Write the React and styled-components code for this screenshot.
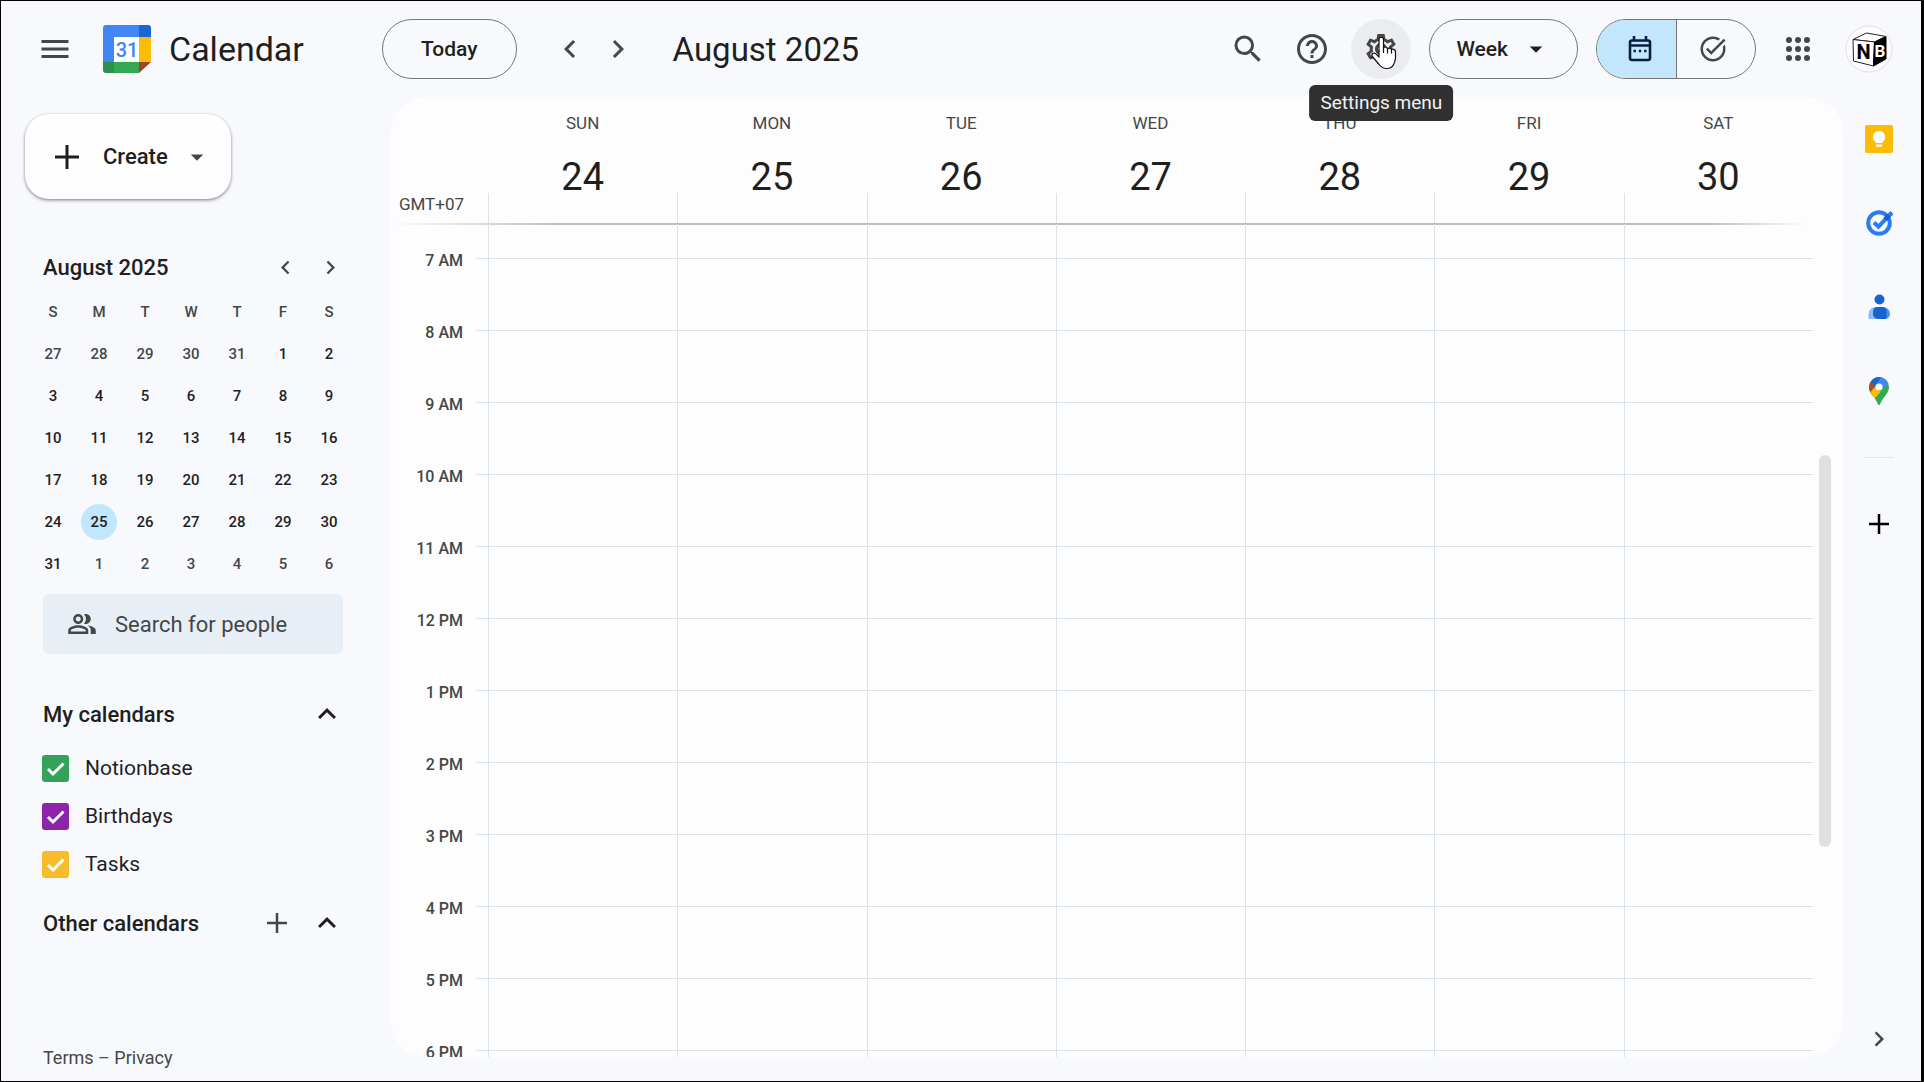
import React, { useState } from 'react'
import styled, { createGlobalStyle } from 'styled-components'
import {
    MdMenu,
    MdSearch,
    MdHelpOutline,
    MdOutlineSettings,
    MdArrowDropDown,
    MdChevronLeft,
    MdChevronRight,
    MdExpandLess,
    MdOutlinePeopleAlt,
    MdTaskAlt,
} from 'react-icons/md'

const GlobalStyle = createGlobalStyle`
    *{
        box-sizing:border-box;
    }
    body{
        margin:0;
        font-family:Roboto, "Open Sans", sans-serif;
        color:#1f1f1f;
        background-color:#f8f9fd;
    }
    button, input{
        font-family:inherit;
        color:inherit;
    }
    button{
        background:none;
        border:none;
        padding:0;
        cursor:pointer;
    }
    svg{
        display:block;
        flex:none;
    }
`

const Shell = styled.div`
    height:100vh;
    display:flex;
    flex-direction:column;
    overflow:hidden;
    border:1px solid #000;
    border-right-width:3px;
`

const Header = styled.header`
    height:96px;
    flex:none;
    display:flex;
    align-items:center;
    padding:0 22px 0 24px;
`

const IconButton = styled.button`
    position:relative;
    width:60px;
    height:60px;
    display:flex;
    align-items:center;
    justify-content:center;
    border-radius:50%;
    color:#444746;
    background-color:${props => props.$active ? '#ebecef' : 'transparent'};
`

const Brand = styled.div`
    width:279px;
    display:flex;
    align-items:center;
    gap:18px;
    margin-left:18px;
    font-size:34px;
`

const PillButton = styled.button`
    height:60px;
    display:flex;
    align-items:center;
    justify-content:center;
    gap:13px;
    padding:0 ${props => props.$side}px;
    border:1px solid #747775;
    border-radius:30px;
    font-size:21px;
    font-weight:500;
`

const Arrows = styled.div`
    display:flex;
    margin-left:35px;
`

const ArrowButton = styled.button`
    width:${props => props.$size}px;
    height:48px;
    display:flex;
    align-items:center;
    justify-content:center;
    color:${props => props.$dark ? '#1f1f1f' : '#444746'};
`

const PeriodTitle = styled.h1`
    flex:1;
    margin:0 0 0 25px;
    font-size:33px;
    font-weight:400;
`

const Tools = styled.div`
    display:flex;
    align-items:center;
    gap:4px;
    margin-right:18px;

    button:last-child{
        margin-left:5px;
    }
`

const Tooltip = styled.span`
    position:absolute;
    top:66px;
    left:50%;
    transform:translateX(-50%);
    z-index:2;
    padding:0 11px;
    border-radius:6px;
    background-color:#303030;
    color:#f2f2f2;
    font-size:19px;
    line-height:36px;
    white-space:nowrap;
`

const Hand = styled.svg`
    position:absolute;
    top:17px;
    left:19px;
`

const Toggle = styled.div`
    display:flex;
    height:60px;
    margin:0 12px 0 18px;
    border:1px solid #747775;
    border-radius:30px;
    overflow:hidden;
`

const ToggleButton = styled.button`
    width:79px;
    display:flex;
    align-items:center;
    justify-content:center;
    padding-left:6px;
    color:${props => props.$on ? '#0b1d3d' : '#444746'};
    background-color:${props => props.$on ? '#c2e7fd' : 'transparent'};

    & + &{
        padding:0 6px 0 0;
        border-left:1px solid #747775;
    }
`

const Account = styled(IconButton)`
    margin-left:11px;
`

const Body = styled.div`
    flex:1;
    min-height:0;
    display:flex;
`

const Sidebar = styled.aside`
    width:390px;
    flex:none;
    display:flex;
    flex-direction:column;
    padding:17px 38px 8px 24px;
`

const CreateButton = styled.button`
    width:206px;
    height:85px;
    flex:none;
    display:flex;
    align-items:center;
    padding-left:30px;
    border-radius:24px;
    background-color:#fefefe;
    box-shadow:0 1px 3px rgba(0,0,0,.4), 0 2px 4px rgba(0,0,0,.12);
    font-size:22px;
    font-weight:500;

    span{
        margin:0 14px 0 24px;
    }
    svg:last-child{
        color:#444746;
    }
`

const MonthHead = styled.div`
    display:flex;
    align-items:center;
    height:48px;
    margin-top:44px;
    padding-left:18px;
    font-size:22px;
    font-weight:500;

    h2{
        flex:1;
        margin:0;
        font-size:inherit;
        font-weight:inherit;
    }
`

const MonthTable = styled.table`
    width:322px;
    flex:none;
    margin-left:5px;
    border-collapse:collapse;
    table-layout:fixed;

    th, td{
        height:42px;
        padding:0;
        text-align:center;
        font-size:15px;
        font-weight:500;
    }
    th{
        color:#444746;
    }
`

const Day = styled.button`
    width:36px;
    height:36px;
    border-radius:50%;
    font-size:15px;
    font-weight:500;
    color:${props => props.$muted ? '#444746' : '#1f1f1f'};
    background-color:${props => props.$today ? '#c2e7fd' : 'transparent'};
`

const PeopleSearch = styled.label`
    height:60px;
    flex:none;
    display:flex;
    align-items:center;
    gap:18px;
    margin:9px 10px 0 18px;
    padding-left:24px;
    border-radius:6px;
    background-color:#e7eef6;
    color:#444746;

    input{
        flex:1;
        min-width:0;
        padding:0;
        border:none;
        outline:none;
        background:none;
        font-size:22px;
    }
    input::placeholder{
        color:#444746;
        opacity:1;
    }
`

const SectionHead = styled.div`
    height:60px;
    flex:none;
    display:flex;
    align-items:center;
    margin-top:${props => props.$top}px;
    padding:0 8px 0 18px;

    h3{
        flex:1;
        margin:0;
        font-size:22px;
        font-weight:500;
    }
`

const CalendarItem = styled.label`
    height:48px;
    flex:none;
    display:flex;
    align-items:center;
    gap:16px;
    padding-left:17px;
    font-size:21px;
`

const Tick = styled.span`
    display:grid;

    input{
        grid-area:1/1;
        appearance:none;
        width:27px;
        height:27px;
        margin:0;
        border:2px solid ${props => props.$color};
        border-radius:3px;
    }
    input:checked{
        background-color:${props => props.$color};
    }
    svg{
        grid-area:1/1;
        pointer-events:none;
    }
`

const Legal = styled.div`
    margin-top:auto;
    padding-left:18px;
    font-size:18px;
    line-height:30px;
    color:#444746;

    a{
        color:inherit;
        text-decoration:none;
    }
`

const Panel = styled.main`
    flex:1;
    min-width:0;
    display:flex;
    flex-direction:column;
    margin-bottom:24px;
    border-radius:36px;
    overflow:hidden;
    background-color:#fdfdfd;
`

const WeekHead = styled.div`
    height:126px;
    flex:none;
    display:flex;
    padding-right:30px;
`

const Zone = styled.div`
    width:97px;
    flex:none;
    display:flex;
    align-items:flex-end;
    justify-content:flex-end;
    padding:0 24px 10px 0;
    font-size:17px;
    line-height:18px;
    color:#444746;
`

const DayHead = styled.div`
    flex:1;
    text-align:center;
    padding-top:14px;
    background:linear-gradient(#dde3ea, #dde3ea) left bottom / 1px 30px no-repeat;

    span{
        display:block;
        font-size:17px;
        line-height:24px;
        color:#444746;
    }
    strong{
        display:block;
        margin-top:21px;
        font-size:38px;
        font-weight:400;
        line-height:42px;
    }
`

const HeadRule = styled.div`
    height:2px;
    flex:none;
    margin:0 36px -1px 0;
    background:linear-gradient(90deg, transparent, #bdbdbd 12%, #bdbdbd 93%, transparent);
`

const Scroll = styled.div`
    flex:1;
    min-height:0;
    display:flex;
    overflow:hidden;
`

const Times = styled.div`
    width:85px;
    flex:none;
`

const Hour = styled.div`
    height:72px;
    display:flex;
    align-items:center;
    justify-content:flex-end;
    padding-right:13px;
    font-size:16px;
    font-weight:500;
    color:#444746;
`

const Column = styled.div`
    flex:${props => props.$stub ? '0 0 12px' : '1'};
    border-left:${props => props.$stub ? 'none' : '1px solid #dde3ea'};
`

const Slot = styled.div`
    height:72px;
    border-bottom:1px solid #dde3ea;

    &:first-child{
        height:35px;
    }
`

const Track = styled.div`
    width:30px;
    flex:none;
    padding-left:6px;
    display:flex;
    flex-direction:column;

    &::before{
        content:'';
        height:calc(28% - 2px);
    }
`

const Thumb = styled.div`
    width:12px;
    height:47%;
    border-radius:6px;
    background-color:#e0e0e0;
`

const Rail = styled.nav`
    width:78px;
    flex:none;
    display:flex;
    flex-direction:column;
    align-items:center;
    padding:12px 6px 12px 0;
    gap:24px;
`

const RailLine = styled.hr`
    width:30px;
    margin:12px 0;
    border:none;
    border-top:1px solid #e3e5e8;
`

const RailButton = styled(IconButton)`
    flex:none;
    color:${props => props.$dark ? '#000' : '#444746'};
    margin-top:${props => props.$last ? 'auto' : 0};
`

const days = [['SUN', 24], ['MON', 25], ['TUE', 26], ['WED', 27], ['THU', 28], ['FRI', 29], ['SAT', 30]]
const hours = ['7 AM', '8 AM', '9 AM', '10 AM', '11 AM', '12 PM', '1 PM', '2 PM', '3 PM', '4 PM', '5 PM', '6 PM']
const weeks = [
    [27, 28, 29, 30, 31, 1, 2],
    [3, 4, 5, 6, 7, 8, 9],
    [10, 11, 12, 13, 14, 15, 16],
    [17, 18, 19, 20, 21, 22, 23],
    [24, 25, 26, 27, 28, 29, 30],
    [31, 1, 2, 3, 4, 5, 6],
]
const calendars = [
    { name: 'Notionbase', color: '#33a35a' },
    { name: 'Birthdays', color: '#8e24aa' },
    { name: 'Tasks', color: '#f6bc2a' },
]

const isMuted = (week, day) => (week === 0 && day > 20) || (week === 5 && day < 20)

const Plus = ({ size, weight }) => (
    <svg width={size} height={size} viewBox="0 0 24 24" stroke="currentColor" strokeWidth={weight}>
        <path d="M12 0v24M0 12h24" />
    </svg>
)

const Logo = () => (
    <svg width="48" height="48" viewBox="0 0 48 48">
        <path d="M3 0h33v12H11v25H0V3a3 3 0 0 1 3-3z" fill="#4285f4" />
        <path d="M36 0h9a3 3 0 0 1 3 3v9H36z" fill="#1967d2" />
        <path d="M36 12h12v25H36z" fill="#fbbc04" />
        <path d="M11 37h25v11H11z" fill="#34a853" />
        <path d="M0 37h11v11H3a3 3 0 0 1-3-3z" fill="#2f8f50" />
        <path d="M36 37h12L36 48z" fill="#98472b" />
        <path d="M11 12h25v25H11z" fill="#fff" />
        <text x="24" y="32" textAnchor="middle" fontFamily="Roboto" fontSize="20" fontWeight="500" fill="#4285f4">31</text>
    </svg>
)

const HandPointer = () => (
    <Hand width="28" height="34" viewBox="0 0 28 34" aria-hidden="true">
        <path
            d="M9 3.500c0-3 4.500-3 4.500 0V12c.8-1.500 3.800-1.300 4 .8.900-1.200 3.700-1 4 .9 1-1 4-.5 4 2v6c0 3-.8 4.500-1.800 6.500-1.500 3.200-4 4.300-7 4.300-4 0-6-1.500-8-4.500L2.300 20.500c-1.500-2.500 1.400-4.500 3.600-2.600L9 21z"
            fill="#fff"
            stroke="#111"
            strokeWidth="1.200"
            strokeLinejoin="round"
        />
        <path d="M13.500 11v6M17.500 12.500v5M21.500 13.500v4" stroke="#111" strokeWidth="1.200" />
    </Hand>
)

const DateIcon = () => (
    <svg width="24" height="26" viewBox="0 0 24 26" fill="none" stroke="currentColor">
        <rect x="2" y="4.500" width="20" height="19.500" rx="2" strokeWidth="2.600" />
        <path d="M1 9.500h22" strokeWidth="2.600" />
        <path d="M6 0v4M18 0v4" strokeWidth="2.600" />
        <path d="M5.500 15h2.400M10.800 15h2.400M16.100 15h2.400" strokeWidth="2.400" />
    </svg>
)

const AppsIcon = () => (
    <svg width="24" height="24" viewBox="0 0 24 24" fill="currentColor">
        {[3, 12, 21].map(y => [3, 12, 21].map(x => <circle key={x + '-' + y} cx={x} cy={y} r="3" />))}
    </svg>
)

const Avatar = () => (
    <svg width="48" height="48" viewBox="0 0 48 48">
        <circle cx="24" cy="24" r="23" fill="#fdfdfd" stroke="#dfe0e3" />
        <path d="M8 14.500L21.500 8 41 11.500 29.500 17z" fill="#fff" stroke="#222" strokeLinejoin="round" />
        <path d="M8 14.500L29.500 17 28.500 41 8.500 36z" fill="#fff" stroke="#222" strokeLinejoin="round" />
        <path d="M29.500 17L41 11.500V34L28.500 41z" fill="#000" stroke="#000" strokeLinejoin="round" />
        <text x="18.500" y="33.500" textAnchor="middle" fontFamily="Roboto" fontSize="20" fontWeight="700" fill="#000">N</text>
        <text x="35" y="32" textAnchor="middle" fontFamily="Roboto" fontSize="17" fontWeight="700" fill="#fff">B</text>
    </svg>
)

const KeepIcon = () => (
    <svg width="28" height="28" viewBox="0 0 28 28">
        <rect width="28" height="28" rx="2" fill="#fbbc04" />
        <path d="M14 6a6 6 0 0 0-3.500 10.900V18h7v-1.100A6 6 0 0 0 14 6zM11 19.600h6v2.200h-6z" fill="#fff" />
    </svg>
)

const TasksIcon = () => (
    <svg width="28" height="28" viewBox="0 0 28 28" fill="none">
        <circle cx="14" cy="14" r="10.800" stroke="#2a7cf2" strokeWidth="4" />
        <path d="M9 13.500l4.500 4.200 9-9.500" stroke="#2a7cf2" strokeWidth="4" />
        <path d="M20 10.500l7-7" stroke="#2a7cf2" strokeWidth="4.500" />
        <path d="M20.200 10.300l3.800-3.800" stroke="#165fc7" strokeWidth="4.500" />
    </svg>
)

const ContactsIcon = () => (
    <svg width="24" height="26" viewBox="0 0 24 26">
        <path d="M8 13h5v12H1.500v-5A7 7 0 0 1 8 13z" fill="#8cbdf8" />
        <path d="M12 13h4a7 7 0 0 1 7 7 5 5 0 0 1-5 5h-6z" fill="#4a8ff5" />
        <path d="M10.500 13h4.500a4.500 4.500 0 0 1 4.500 4.500V25H11a5 5 0 0 1-5-5v-2.500a4.500 4.500 0 0 1 4.500-4.500z" fill="#1765cc" />
        <circle cx="12.500" cy="5.500" r="5" fill="#1765cc" />
    </svg>
)

const MapsIcon = () => (
    <svg width="20" height="28" viewBox="0 0 20 28">
        <defs>
            <clipPath id="pin">
                <path d="M10 0a10 10 0 0 1 10 10c0 4-2 6.500-4.500 9.800-2.300 3-3.500 5-4.300 7.300-.4 1.200-2 1.200-2.400 0-.8-2.300-2-4.300-4.300-7.300C2 16.500 0 14 0 10A10 10 0 0 1 10 0z" />
            </clipPath>
        </defs>
        <g clipPath="url(#pin)">
            <path d="M0 0h20v28H0z" fill="#34a853" />
            <path d="M0 4h3l7 6-8 8-2-3z" fill="#a4502c" />
            <path d="M1 15.500l5-5.500 4 4 2 .5-7.500 8.500L0 19z" fill="#fbbc04" />
            <path d="M2 4l3-4h8L10 6l-4 3z" fill="#1967d2" />
            <path d="M12 0l8 3v4L10 12 7 8z" fill="#4285f4" />
        </g>
        <circle cx="10" cy="10" r="3.600" fill="#fff" />
    </svg>
)

const CalendarCheck = ({ name, color }) => {
    const [checked, setChecked] = useState(true)

    return (
        <CalendarItem>
            <Tick $color={color}>
                <input type="checkbox" checked={checked} onChange={() => setChecked(!checked)} />
                <svg width="27" height="27" viewBox="0 0 27 27" fill="none" stroke="#fff" strokeWidth="3">
                    <path d="M6 14l5 5L21.500 8.500" />
                </svg>
            </Tick>
            {name}
        </CalendarItem>
    )
}

const MonthPicker = () => (
    <>
        <MonthHead>
            <h2>August 2025</h2>
            <ArrowButton $size={45} aria-label="Previous month"><MdChevronLeft size={27} /></ArrowButton>
            <ArrowButton $size={45} aria-label="Next month"><MdChevronRight size={27} /></ArrowButton>
        </MonthHead>
        <MonthTable>
            <thead>
                <tr>{['S', 'M', 'T', 'W', 'T', 'F', 'S'].map((d, i) => <th key={i}>{d}</th>)}</tr>
            </thead>
            <tbody>
                {weeks.map((week, w) => (
                    <tr key={w}>
                        {week.map(day => (
                            <td key={day}>
                                <Day $muted={isMuted(w, day)} $today={w === 4 && day === 25}>{day}</Day>
                            </td>
                        ))}
                    </tr>
                ))}
            </tbody>
        </MonthTable>
    </>
)

const WeekGrid = () => (
    <Panel>
        <WeekHead>
            <Zone>GMT+07</Zone>
            {days.map(([name, number]) => (
                <DayHead key={name}>
                    <span>{name}</span>
                    <strong>{number}</strong>
                </DayHead>
            ))}
        </WeekHead>
        <HeadRule />
        <Scroll>
            <Times>
                {hours.map(hour => <Hour key={hour}>{hour}</Hour>)}
            </Times>
            <Column $stub>
                {hours.map(hour => <Slot key={hour} />)}
            </Column>
            {days.map(([name]) => (
                <Column key={name}>
                    {hours.map(hour => <Slot key={hour} />)}
                    <Slot />
                </Column>
            ))}
            <Track><Thumb /></Track>
        </Scroll>
    </Panel>
)

const App = () => (
    <>
        <GlobalStyle />
        <Shell>
            <Header>
                <IconButton aria-label="Main menu"><MdMenu size={36} /></IconButton>
                <Brand><Logo />Calendar</Brand>
                <PillButton $side={38}>Today</PillButton>
                <Arrows>
                    <ArrowButton $size={36} aria-label="Previous week"><MdChevronLeft size={36} /></ArrowButton>
                    <ArrowButton $size={60} aria-label="Next week"><MdChevronRight size={36} /></ArrowButton>
                </Arrows>
                <PeriodTitle>August 2025</PeriodTitle>
                <Tools>
                    <IconButton aria-label="Search"><MdSearch size={36} /></IconButton>
                    <IconButton aria-label="Support"><MdHelpOutline size={36} /></IconButton>
                    <IconButton $active aria-label="Settings menu">
                        <MdOutlineSettings size={36} />
                        <HandPointer />
                        <Tooltip>Settings menu</Tooltip>
                    </IconButton>
                </Tools>
                <PillButton $side={26}>Week<MdArrowDropDown size={30} /></PillButton>
                <Toggle>
                    <ToggleButton $on aria-label="Calendar view"><DateIcon /></ToggleButton>
                    <ToggleButton aria-label="Tasks view"><MdTaskAlt size={30} /></ToggleButton>
                </Toggle>
                <IconButton aria-label="Apps"><AppsIcon /></IconButton>
                <Account aria-label="Account"><Avatar /></Account>
            </Header>
            <Body>
                <Sidebar>
                    <CreateButton>
                        <Plus size={24} weight={3} />
                        <span>Create</span>
                        <MdArrowDropDown size={30} />
                    </CreateButton>
                    <MonthPicker />
                    <PeopleSearch>
                        <MdOutlinePeopleAlt size={30} />
                        <input type="text" placeholder="Search for people" aria-label="Search for people" />
                    </PeopleSearch>
                    <SectionHead $top={30}>
                        <h3>My calendars</h3>
                        <ArrowButton $size={36} $dark aria-label="Collapse my calendars"><MdExpandLess size={36} /></ArrowButton>
                    </SectionHead>
                    {calendars.map(item => <CalendarCheck key={item.name} {...item} />)}
                    <SectionHead $top={5}>
                        <h3>Other calendars</h3>
                        <ArrowButton $size={64} aria-label="Add other calendars"><Plus size={20} weight={3} /></ArrowButton>
                        <ArrowButton $size={36} $dark aria-label="Collapse other calendars"><MdExpandLess size={36} /></ArrowButton>
                    </SectionHead>
                    <Legal><a href="#terms">Terms</a> – <a href="#privacy">Privacy</a></Legal>
                </Sidebar>
                <WeekGrid />
                <Rail>
                    <RailButton aria-label="Keep"><KeepIcon /></RailButton>
                    <RailButton aria-label="Tasks"><TasksIcon /></RailButton>
                    <RailButton aria-label="Contacts"><ContactsIcon /></RailButton>
                    <RailButton aria-label="Maps"><MapsIcon /></RailButton>
                    <RailLine />
                    <RailButton $dark aria-label="Get add-ons"><Plus size={20} weight={3} /></RailButton>
                    <RailButton $last aria-label="Hide side panel"><MdChevronRight size={30} /></RailButton>
                </Rail>
            </Body>
        </Shell>
    </>
)

export default App
